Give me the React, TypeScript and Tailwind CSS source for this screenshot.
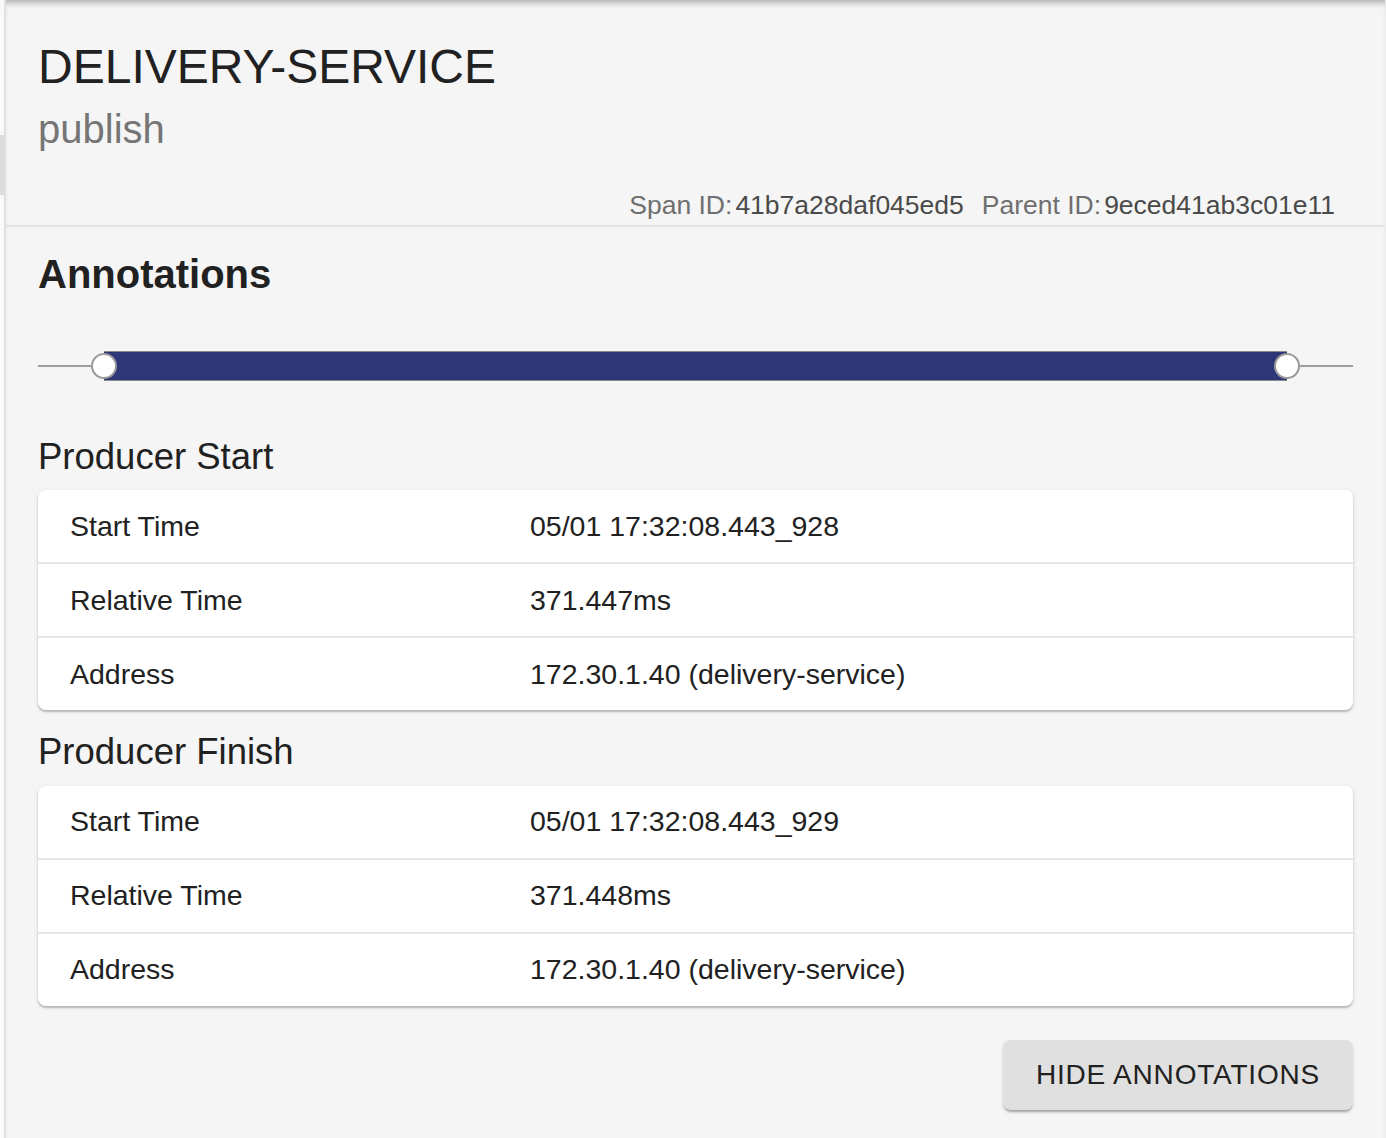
import React from 'react';

type Row = { label: string; value: string };

const annotations: { title: string; rows: Row[] }[] = [
  {
    title: 'Producer Start',
    rows: [
      { label: 'Start Time', value: '05/01 17:32:08.443_928' },
      { label: 'Relative Time', value: '371.447ms' },
      { label: 'Address', value: '172.30.1.40 (delivery-service)' },
    ],
  },
  {
    title: 'Producer Finish',
    rows: [
      { label: 'Start Time', value: '05/01 17:32:08.443_929' },
      { label: 'Relative Time', value: '371.448ms' },
      { label: 'Address', value: '172.30.1.40 (delivery-service)' },
    ],
  },
];

const RangeSlider: React.FC = () => (
  <div className="relative h-[30px]">
    {/* rail */}
    <div className="absolute left-0 right-0 top-[14px] h-[2px] bg-[#9e9e9e]" />
    {/* selected range */}
    <div className="absolute left-[66px] right-[66px] top-0 h-[30px] bg-[#2d3778] border-y border-[#8a8a8a]" />
    {/* thumbs */}
    <div className="absolute left-[53px] top-[2px] w-[26px] h-[26px] rounded-full bg-white border-2 border-[#9a9a9a]" />
    <div className="absolute right-[53px] top-[2px] w-[26px] h-[26px] rounded-full bg-white border-2 border-[#9a9a9a]" />
  </div>
);

const AnnotationCard: React.FC<{ rows: Row[] }> = ({ rows }) => (
  <div className="bg-white rounded-[8px] shadow-[0_2px_2px_rgba(0,0,0,0.22),0_1px_6px_rgba(0,0,0,0.08)]">
    {rows.map((row, i) => (
      <div
        key={row.label}
        className={`flex items-center text-[28.5px] leading-none text-[#212121] ${
          i < rows.length - 1 ? 'h-[74px] border-b-2 border-[#e6e6e6]' : 'h-[72px]'
        }`}
      >
        <div className="w-[492px] shrink-0 pl-[32px]">{row.label}</div>
        <div className="flex-1">{row.value}</div>
      </div>
    ))}
  </div>
);

export default function App() {
  return (
    <div
      className="flex min-h-[1138px] bg-white"
      style={{ fontFamily: '"Liberation Sans", Arial, Helvetica, sans-serif' }}
    >
      {/* left gutter */}
      <div className="w-[4px] shrink-0 bg-[#f9f9f9]">
        <div className="mt-[135px] h-[60px] bg-[#dcdcdc]" />
      </div>

      <div className="flex-1 border-l-2 border-r border-[#e0e0e0] border-r-[#ececec] bg-[#f5f5f5] shadow-[inset_0_7px_6px_-4px_rgba(0,0,0,0.28)]">
        {/* header */}
        <div className="pl-[32px] pr-[50px] pt-[43px] pb-[6px] border-b-2 border-[#e3e3e3]">
          <h1 className="text-[48px] leading-none text-[#212121]">DELIVERY-SERVICE</h1>
          <div className="mt-[18px] text-[40px] leading-none text-[#757575]">publish</div>
          <div className="mt-[43px] flex justify-end text-[26.5px] leading-none">
            <span className="text-[#6f6f6f]">Span ID:</span>
            <span className="ml-[3px] text-[#4a4a4a]">41b7a28daf045ed5</span>
            <span className="ml-[18px] text-[#6f6f6f]">Parent ID:</span>
            <span className="ml-[3px] text-[#4a4a4a]">9eced41ab3c01e11</span>
          </div>
        </div>

        {/* annotations */}
        <div className="px-[32px] pt-[27px] pb-[28px]">
          <h2 className="text-[40px] font-bold leading-none text-[#212121]">Annotations</h2>
          <div className="mt-[57px]">
            <RangeSlider />
          </div>

          <div className="mt-[58px] flex flex-col">
            {annotations.map((a, i) => (
              <div key={a.title} className={i > 0 ? 'mt-[24px]' : ''}>
                <h3 className="mb-[15px] text-[36.5px] leading-none text-[#212121]">{a.title}</h3>
                <AnnotationCard rows={a.rows} />
              </div>
            ))}
          </div>

          <div className="mt-[34px] flex justify-end">
            <button className="w-[350px] h-[70px] rounded-[8px] bg-[#e0e0e0] text-[28px] tracking-[0.8px] leading-none text-[#212121] shadow-[0_3px_2px_-1px_rgba(0,0,0,0.25),0_2px_4px_rgba(0,0,0,0.12)]">
              HIDE ANNOTATIONS
            </button>
          </div>
        </div>
      </div>
    </div>
  );
}
